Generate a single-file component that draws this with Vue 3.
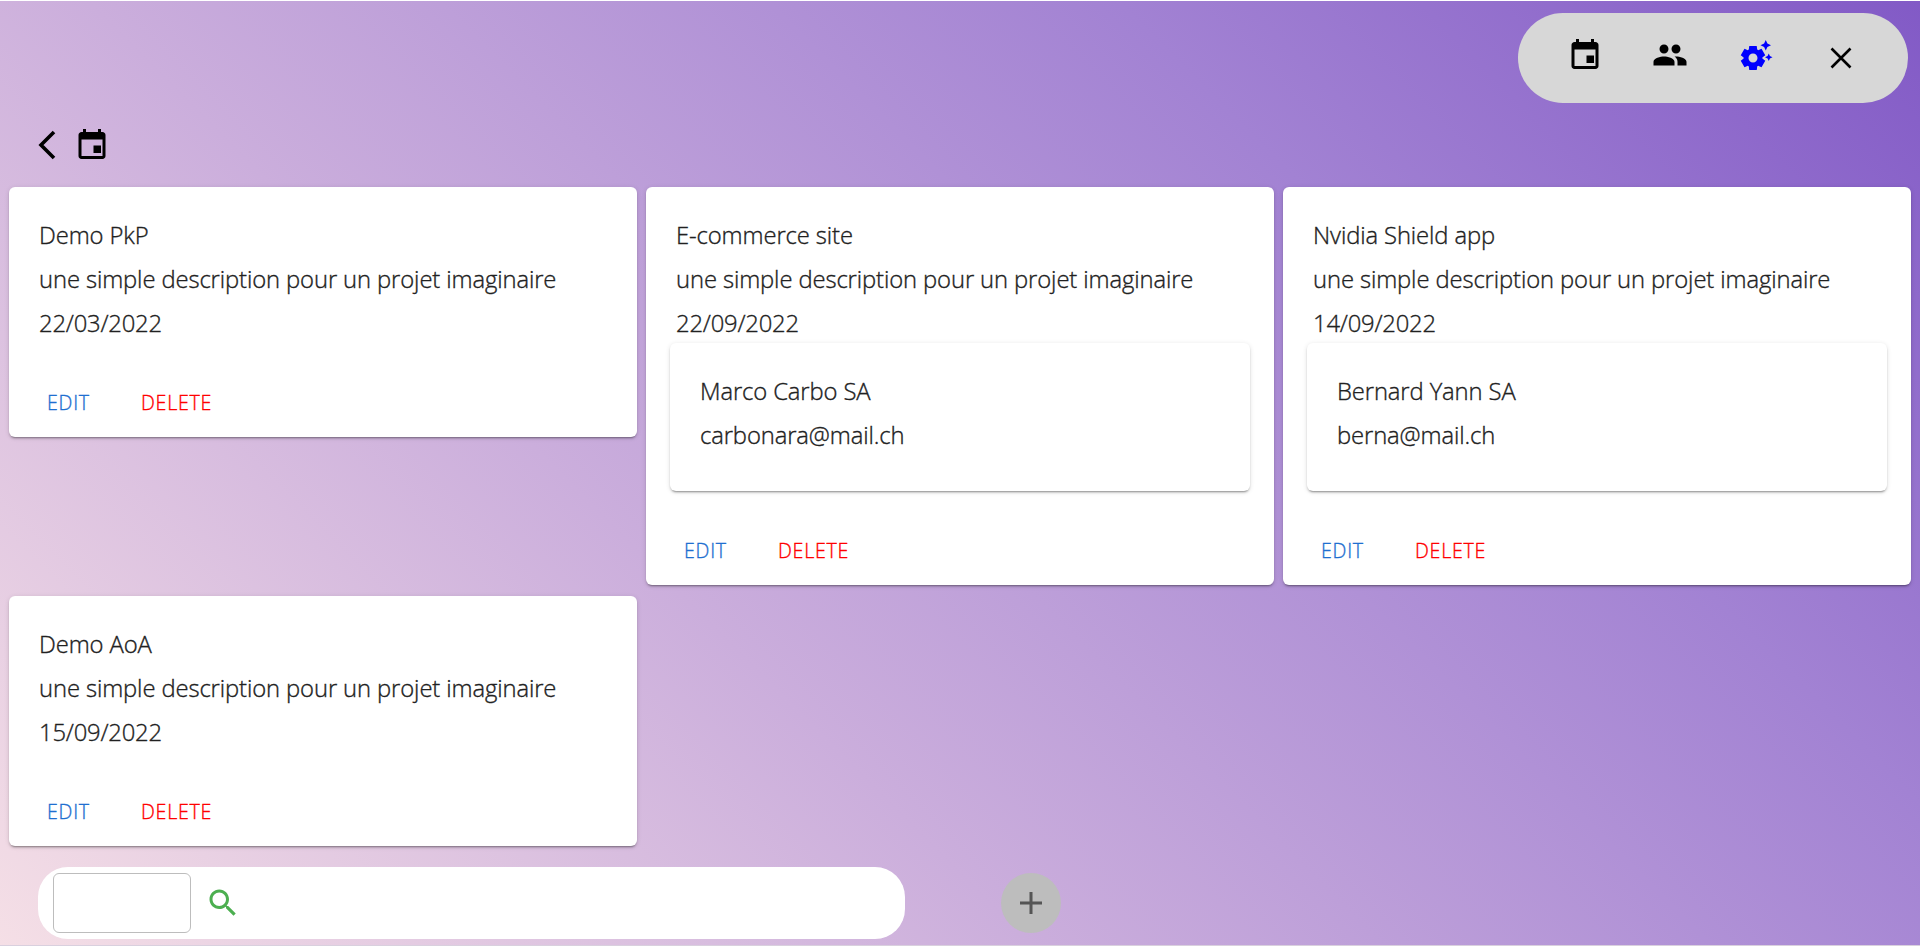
<script setup>
const calendar = 'M19 4h-1V2h-2v2H8V2H6v2H5c-1.11 0-1.99.9-1.99 2L3 20c0 1.1.89 2 2 2h14c1.1 0 2-.9 2-2V6c0-1.100-.9-2-2-2zm0 16H5V9h14v11zm-6-7h5v5h-5z'
const description = 'une simple description pour un projet imaginaire'
const projects = [
  { name: 'Demo PkP', date: '22/03/2022' },
  { name: 'E-commerce site', date: '22/09/2022', client: { name: 'Marco Carbo SA', mail: 'carbonara@mail.ch' } },
  { name: 'Nvidia Shield app', date: '14/09/2022', client: { name: 'Bernard Yann SA', mail: 'berna@mail.ch' } },
  { name: 'Demo AoA', date: '15/09/2022' },
]
</script>

<template>
  <div class="page">
    <header class="top">
      <nav class="menu">
        <svg class="m-cal" viewBox="0 0 24 24"><path :d="calendar" /></svg>
        <svg class="m-people" viewBox="0 0 24 24"><path d="M16 11c1.66 0 2.990-1.340 2.990-3S17.660 5 16 5s-3 1.340-3 3 1.340 3 3 3zm-8 0c1.660 0 2.990-1.340 2.990-3S9.660 5 8 5 5 6.340 5 8s1.340 3 3 3zm0 2c-2.330 0-7 1.170-7 3.500V19h14v-2.500c0-2.330-4.670-3.500-7-3.500zm8 0c-.29 0-.62.02-.97.05 1.160.84 1.970 1.970 1.970 3.450V19h6v-2.500c0-2.330-4.670-3.500-7-3.500z" /></svg>
        <svg class="m-gear" viewBox="0 0 24 24"><path d="M17.410 6.590 15 5.500l2.410-1.090L18.500 2l1.090 2.410L22 5.500l-2.410 1.090L18.500 9l-1.090-2.410zm3.870 6.130L20.500 11l-.78 1.720-1.720.78 1.720.78.78 1.720.78-1.720L23 13.500l-1.720-.78zm-5.040 1.650 1.940 1.470-2.500 4.330-2.240-.94c-.2.13-.42.26-.64.37l-.3 2.400h-5l-.3-2.410c-.22-.11-.43-.23-.64-.37l-2.240.94-2.500-4.330 1.940-1.470c-.01-.11-.01-.24-.01-.36s0-.25.01-.37l-1.940-1.470 2.500-4.330 2.240.94c.2-.13.42-.26.64-.37L7.500 6h5l.3 2.410c.22.11.43.23.64.37l2.240-.94 2.500 4.330-1.940 1.470c.01.12.01.24.01.37s0 .24-.01.36zM13 14c0-1.660-1.340-3-3-3s-3 1.340-3 3 1.340 3 3 3 3-1.340 3-3z" /></svg>
        <svg class="m-close" viewBox="0 0 22 22"><path d="M1.500 1.500l19 19M20.500 1.500l-19 19" /></svg>
      </nav>
    </header>

    <div class="crumb">
      <svg class="back" viewBox="0 0 18 30"><path d="M16 2L3 15l13 13" /></svg>
      <svg class="cal" viewBox="0 0 24 24"><path :d="calendar" /></svg>
    </div>

    <main class="grid">
      <article v-for="p in projects" :key="p.name" class="card">
        <div class="text">
          <p>{{ p.name }}</p>
          <p class="desc">{{ description }}</p>
          <p class="date">{{ p.date }}</p>
        </div>
        <div v-if="p.client" class="client">
          <p>{{ p.client.name }}</p>
          <p>{{ p.client.mail }}</p>
        </div>
        <div class="actions">
          <button class="edit">EDIT</button>
          <button class="delete">DELETE</button>
        </div>
      </article>
    </main>

    <footer class="bottom">
      <div class="search">
        <input class="field" type="text" />
        <svg class="glass" viewBox="0 0 24 24"><path d="M15.500 14h-.79l-.28-.27C15.410 12.590 16 11.110 16 9.500 16 5.910 13.090 3 9.500 3S3 5.910 3 9.500 5.910 16 9.500 16c1.610 0 3.090-.59 4.230-1.570l.27.28v.79l5 4.990L20.490 19l-4.990-5zm-6 0C7.010 14 5 11.990 5 9.500S7.010 5 9.500 5 14 7.010 14 9.500 11.990 14 9.500 14z" /></svg>
      </div>
      <button class="add"><svg viewBox="0 0 22 22"><path d="M11 0v22M0 11h22" /></svg></button>
    </footer>
  </div>
</template>

<style>
body {
  margin: 0;
  overflow: hidden;
}
</style>

<style scoped>
.page {
  box-sizing: border-box;
  height: 946px;
  border-top: 1px solid #fff;
  border-bottom: 1px solid #d9d0de;
  background: linear-gradient(45deg, #f5dfe6 0%, #cbaedc 36%, #a282d3 72%, #825ac6 100%);
  font-family: "Open Sans", "Noto Sans", sans-serif;
  font-weight: 300;
  -webkit-text-stroke: 0.350px currentColor;
  color: #212121;
  overflow: hidden;
}
svg { display: block; flex: none; }
.top {
  display: flex;
  justify-content: flex-end;
  padding: 12px 12px 0 0;
}
.menu {
  display: flex;
  box-sizing: border-box;
  width: 390px;
  height: 90px;
  padding-left: 49px;
  border-radius: 45px;
  background: #d7d7d7;
}
.m-cal { width: 36px; height: 36px; margin: 22.500px 0 0 0; }
.m-people { width: 36px; height: 36px; margin: 24px 0 0 49px; }
.m-gear { width: 36px; height: 36px; margin: 24px 0 0 50px; fill: #00f; }
.m-close { width: 22px; height: 22px; margin: 34px 0 0 56px; stroke: #000; stroke-width: 2.600; }
.crumb {
  display: flex;
  height: 84px;
  padding-left: 38px;
}
.back { width: 18px; height: 30px; margin-top: 27px; fill: none; stroke: #000; stroke-width: 3.600; }
.cal { width: 36px; height: 36px; margin: 22.500px 0 0 18px; }
.grid {
  display: grid;
  grid-template-columns: repeat(3, 628px);
  column-gap: 9px;
  row-gap: 11px;
  align-items: start;
  padding-left: 9px;
}
.card {
  box-sizing: border-box;
  padding: 24px 24px 12px;
  border-radius: 6px;
  background: #fff;
}
.card, .client {
  box-shadow: 0 3px 1px -2px rgba(0, 0, 0, 0.2), 0 2px 2px rgba(0, 0, 0, 0.14), 0 1px 5px rgba(0, 0, 0, 0.12);
}
.text { padding: 2px 6px 0; }
p {
  margin: 0;
  font-size: 23.800px;
  line-height: 44px;
  letter-spacing: -0.110px;
  white-space: nowrap;
}
.date { letter-spacing: -0.200px; }
.client {
  box-sizing: border-box;
  height: 148px;
  margin: -2px 0 0;
  padding: 26px 30px;
  border-radius: 6px;
}
.client + .actions { padding-top: 38px; }
.actions {
  display: flex;
  gap: 52px;
  padding-top: 36px;
  height: 44px;
  padding-left: 14px;
}
button {
  height: 42px;
  padding: 0;
  border: 0;
  background: none;
  font-family: inherit;
  font-weight: inherit;
  font-size: 19.600px;
  letter-spacing: 0.750px;
}
.edit { width: 42px; color: #1f6fd0; white-space: nowrap; }
.delete { color: #f00; }
.bottom {
  display: flex;
  align-items: center;
  padding: 21px 0 0 38px;
}
.search {
  display: flex;
  box-sizing: border-box;
  width: 867px;
  height: 72px;
  padding: 6px 0 0 15px;
  border-radius: 30px;
  background: #fff;
}
.field {
  box-sizing: border-box;
  width: 138px;
  height: 60px;
  padding: 0 12px;
  border: 1px solid #bdbdbd;
  border-radius: 6px;
  background: #fff;
}
.glass { width: 36px; height: 36px; margin: 12px 0 0 14px; fill: #4caf50; }
.add {
  display: flex;
  align-items: center;
  justify-content: center;
  width: 60px;
  height: 60px;
  margin-left: 96px;
  border-radius: 50%;
  background: #bdbdbd;
}
.add svg { width: 22px; height: 22px; stroke: #555; stroke-width: 3; }
</style>
